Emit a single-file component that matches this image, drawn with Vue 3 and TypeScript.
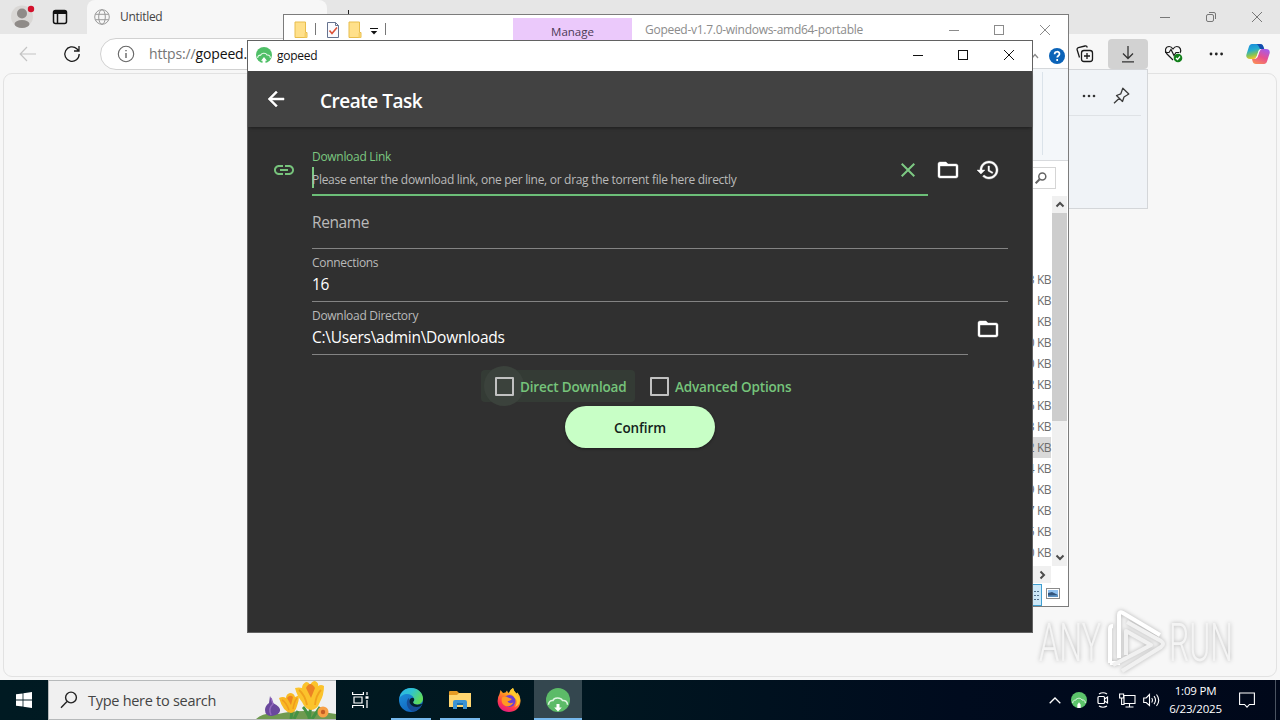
<script setup lang="ts">
interface Field {
  id: string
  label: string
  value: string
  browse: boolean
}

const fields: Field[] = [
  { id: 'rename', label: 'Rename', value: '', browse: false },
  { id: 'connections', label: 'Connections', value: '16', browse: false },
  { id: 'directory', label: 'Download Directory', value: 'C:\\Users\\admin\\Downloads', browse: true },
]

const sizes: string[] = ['3 KB', '1 KB', '1 KB', '0 KB', '0 KB', '2 KB', '6 KB', '3 KB', '2 KB', '4 KB', '9 KB', '7 KB', '5 KB', '0 KB']
const selectedRow = 8

const folderPath =
  'M20 6h-8l-2-2H4c-1.1 0-1.99.9-1.99 2L2 18c0 1.1.9 2 2 2h16c1.1 0 2-.9 2-2V8c0-1.1-.9-2-2-2zm0 12H4V8h16v10z'
</script>

<template>
  <div class="desktop">
    <!-- Browser -->
    <div class="browser">
      <div class="tabstrip">
        <div class="tabactions">
          <svg class="avatar" width="24" height="24" viewBox="0 0 24 24">
            <circle cx="11" cy="12.500" r="11" fill="#d9d7d5" />
            <circle cx="11" cy="9.500" r="5" fill="#8f8b88" />
            <ellipse cx="11" cy="20" rx="7.500" ry="4" fill="#8f8b88" />
            <circle cx="20" cy="5" r="3.200" fill="#d3112c" />
          </svg>
          <svg class="workspace" width="16" height="16" viewBox="0 0 16 16" fill="none" stroke="#111" stroke-width="1.500">
            <rect x="1.500" y="1.500" width="13" height="13" rx="2" />
            <path d="M1.500 3.500h13" stroke-width="3" />
            <path d="M5.500 4v10" />
          </svg>
        </div>
        <div class="tab">
          <svg width="16" height="16" viewBox="0 0 16 16" fill="none" stroke="#9a9a9a" stroke-width="1">
            <circle cx="8" cy="8" r="7.300" />
            <ellipse cx="8" cy="8" rx="3.300" ry="7.300" />
            <path d="M1.300 5.300h13.400M1.300 10.700h13.400" />
          </svg>
          <span class="tabtitle">Untitled</span>
          <svg class="tabclose" width="10" height="10" viewBox="0 0 10 10" stroke="#444"><path d="M1 1l8 8M9 1L1 9" /></svg>
        </div>
        <svg class="newtab" width="13" height="13" viewBox="0 0 13 13" stroke="#222"><path d="M6.500 0v13M0 6.500h13" /></svg>
        <div class="wincontrols edgecontrols">
          <svg width="12" height="12" viewBox="0 0 12 12"><path d="M1 6.500h10" /></svg>
          <svg width="12" height="12" viewBox="0 0 12 12"><rect x="1.500" y="3.500" width="7" height="7" rx="1.500" /><path d="M4 1.500h5a1.500 1.500 0 0 1 1.500 1.500v5" /></svg>
          <svg width="12" height="12" viewBox="0 0 12 12"><path d="M1 1l10 10M11 1L1 11" /></svg>
        </div>
      </div>
      <div class="toolbar">
        <svg class="back" width="18" height="16" viewBox="0 0 18 16" fill="none" stroke="#c4c4c4" stroke-width="1.200"><path d="M17 8H1.500M8 1L1.200 8 8 15" /></svg>
        <svg class="reload" width="18" height="18" viewBox="0 0 18 18" fill="none" stroke="#1b1b1b" stroke-width="1.300"><path d="M16.200 9A7.200 7.200 0 1 1 13.800 3.700L16 6M16 1v5h-5" /></svg>
        <div class="omnibox">
          <svg width="18" height="18" viewBox="0 0 18 18" fill="none" stroke="#666" stroke-width="1.100">
            <circle cx="9" cy="9" r="7.700" /><path d="M9 8v5M9 5v1.300" stroke-width="1.400" />
          </svg>
          <span class="url"><span>https://</span>gopeed.com</span>
        </div>
        <div class="edgetools">
          <svg class="collections" width="18" height="18" viewBox="0 0 18 18" fill="none" stroke="#1a1a1a" stroke-width="1.300">
            <rect x="5.500" y="5.500" width="11" height="11" rx="2.500" />
            <path d="M11 8v6M8 11h6M3.500 12.500L1.200 5C.8 3.800 1.400 3 2.400 2.700L9 1c1.200-.3 2 .3 2.300 1.500" />
          </svg>
          <div class="dlbutton">
            <svg width="14" height="18" viewBox="0 0 14 18" fill="none" stroke="#333" stroke-width="1.300"><path d="M7 1v12M2 8.500L7 13.500l5-5M1 16.800h12" /></svg>
          </div>
          <svg class="heart" width="20" height="18" viewBox="0 0 20 18" fill="none" stroke="#1b1b1b" stroke-width="1.200">
            <path d="M9 15L3 9C0 6 1.500 1.500 5.200 1.500 7 1.500 8 2.500 9 4c1-1.500 2-2.500 3.800-2.500 3.200 0 5 3.500 3.200 6.500M1 7.500h4l2-3 3 6 2-3h3" />
            <circle cx="14" cy="13" r="4.300" fill="#13801c" stroke="none" />
            <path d="M12 13l1.500 1.500 2.500-3" stroke="#fff" />
          </svg>
          <svg class="dots" width="14" height="4" viewBox="0 0 14 4" fill="#222"><circle cx="2" cy="2" r="1.400" /><circle cx="7.300" cy="2" r="1.400" /><circle cx="12.600" cy="2" r="1.400" /></svg>
          <svg class="copilot" width="24" height="22" viewBox="0 0 24 22">
            <defs>
              <linearGradient id="cpA" x1="0" y1="0" x2="0.300" y2="1"><stop offset="0" stop-color="#1687dd" /><stop offset=".45" stop-color="#26acd0" /><stop offset=".75" stop-color="#81c459" /><stop offset="1" stop-color="#f0c52b" /></linearGradient>
              <linearGradient id="cpB" x1="0.700" y1="0" x2="0.200" y2="1"><stop offset="0" stop-color="#a85be7" /><stop offset=".5" stop-color="#e8508e" /><stop offset="1" stop-color="#fa8d56" /></linearGradient>
            </defs>
            <path d="M6 1h8c2 0 3 1 3.500 3l.7 2H16c-2 0-3 .8-3.700 3l-1.500 4.600C10 15.500 9 16 7.500 16H4c-3 0-4.500-2-3.400-5L3 3.500C3.500 2 4.500 1 6 1z" fill="url(#cpA)" />
            <path d="M10.500 1H14c2 0 3 1 3.500 3l.7 2H14c-1-2-1.300-4-3.500-5z" fill="#154cae" />
            <path d="M18 21h-8c-2 0-3-1-3.500-3L6 16h2c2 0 3-.8 3.700-3l1.500-4.600C14 6.500 15 6 16.500 6H20c3 0 4.500 2 3.400 5L21 18.500c-.5 1.500-1.500 2.500-3 2.500z" fill="url(#cpB)" />
            <path d="M9 15.500q1.300-.8 2-3l1.300-4q.5-1.700 1.700-2.200h1.500q-1.500.6-2.100 2.400l-1.300 4q-.7 2.200-2.200 2.800z" fill="#f7f7f7" />
          </svg>
        </div>
      </div>
      <div class="page"></div>
    </div>

    <div class="flyout">
      <div class="flyhead">
        <svg width="14" height="4" viewBox="0 0 14 4" fill="#333"><circle cx="2" cy="2" r="1.300" /><circle cx="7" cy="2" r="1.300" /><circle cx="12" cy="2" r="1.300" /></svg>
        <svg width="17" height="17" viewBox="0 0 17 17" fill="none" stroke="#3b3b3b" stroke-width="1.300" stroke-linejoin="round"><path d="M9.800 1.200l6 5.800-2 1.300-2.800 1.700-1.500 4.500-6-6 4.300-1.700zM6.300 11.300L1 16.300" /></svg>
      </div>
    </div>

    <!-- File explorer -->
    <div class="explorer">
      <div class="extitle">
        <div class="quick">
          <svg class="fold" width="14" height="18" viewBox="0 0 14 18"><path d="M1 1h10.500v10.500H13v5H1z" fill="#ffe08a" stroke="#e8bd4c" /><path d="M10.500 12v4.500H13V12z" fill="#f5cf67" /></svg>
          <i></i>
          <svg class="check" width="12" height="16" viewBox="0 0 12 16"><path d="M.5.500h8l3 3v12H.5z" fill="#fbfbfe" stroke="#66738f" /><path d="M8.500.500v3h3" fill="none" stroke="#66738f" /><path d="M2.500 8.500l2.500 3 5-6" fill="none" stroke="#dd5238" stroke-width="1.600" /></svg>
          <svg class="fold2" width="14" height="18" viewBox="0 0 14 18"><path d="M1 1h10.500v10.500H13v5H1z" fill="#ffe08a" stroke="#e8bd4c" /><path d="M10.500 12v4.500H13V12z" fill="#f5cf67" /></svg>
          <svg class="caret" width="8" height="7" viewBox="0 0 8 7"><path d="M0 .5h8" stroke="#111" /><path d="M.8 3h6.400L4 6.500z" fill="#111" /></svg>
          <i></i>
        </div>
        <div class="manage">Manage</div>
        <div class="exname">Gopeed-v1.7.0-windows-amd64-portable</div>
        <div class="wincontrols excontrols">
          <svg width="12" height="12" viewBox="0 0 12 12"><path d="M2 6.500h10" /></svg>
          <svg width="12" height="12" viewBox="0 0 12 12"><rect x="1.500" y="1.500" width="9" height="9" /></svg>
          <svg width="12" height="12" viewBox="0 0 12 12"><path d="M1 1l10 10M11 1L1 11" /></svg>
        </div>
      </div>
      <div class="extabs">
        <svg width="8" height="6" viewBox="0 0 8 6" fill="none" stroke="#8a8a8a" stroke-width="1.300"><path d="M1 5l3-3.500L7 5" /></svg>
        <svg class="help" width="16" height="16" viewBox="0 0 16 16"><circle cx="8" cy="8" r="8" fill="#0b63b8" /><path d="M5.600 6.200c0-3.300 4.900-3.200 4.900-.3 0 1.800-2.300 1.900-2.300 3.700M8.200 11v1.900" stroke="#fff" stroke-width="1.700" fill="none" /></svg>
      </div>
      <div class="ribbon"><div class="ribbonend"></div></div>
      <div class="exaddress">
        <div class="exsearch"><svg width="12" height="12" viewBox="0 0 12 12" fill="none" stroke="#646464" stroke-width="1.500"><circle cx="7.300" cy="4.500" r="3.500" /><path d="M4.600 7.200L.7 11.300" stroke-width="2" /></svg></div>
      </div>
      <div class="exbody">
        <div class="rows">
          <div v-for="(s, i) in sizes" :key="i" class="row" :class="{ selected: i === selectedRow }">{{ s }}</div>
        </div>
        <div class="vscroll">
          <svg width="10" height="7" viewBox="0 0 10 7" fill="none" stroke="#4c4c4c" stroke-width="2"><path d="M1.500 5.500L5 2l3.500 3.500" /></svg>
          <div class="thumb"></div>
          <div class="space"></div>
          <svg width="10" height="7" viewBox="0 0 10 7" fill="none" stroke="#4c4c4c" stroke-width="2"><path d="M1.500 1.500L5 5l3.500-3.500" /></svg>
        </div>
      </div>
      <div class="hscroll"><div><svg width="7" height="10" viewBox="0 0 7 10" fill="none" stroke="#4c4c4c" stroke-width="2"><path d="M1.500 1.500L5 5 1.500 8.500" /></svg></div></div>
      <div class="exstatus">
        <div class="details"><svg width="10" height="10" viewBox="0 0 10 10" stroke="#52718c" stroke-dasharray="2 1"><path d="M0 1.500h9M0 5.500h9M0 9.500h9" /></svg></div>
        <svg width="14" height="11" viewBox="0 0 14 11"><rect x=".5" y=".5" width="13" height="10" fill="#fff" stroke="#8b8b8b" /><rect x="2" y="2" width="10" height="7" fill="#8fc0ef" /><path d="M2 5l4-1 6 3v2H2z" fill="#34557c" /><path d="M2 7.500l10-.5v2H2z" fill="#5d93c4" /></svg>
      </div>
    </div>

    <!-- Gopeed -->
    <div class="gopeed">
      <div class="gtitle">
        <svg width="16" height="16" viewBox="0 0 24 24">
          <circle cx="12" cy="12" r="12" fill="#4fbf67" />
          <path d="M2.500 16.500c0-3 2-4.500 4.500-4.300C8 9 14.500 8 16.500 12c3-.5 5 1.500 5 4.500" fill="none" stroke="#e9faec" stroke-width="1.600" />
          <path d="M9.800 24v-3.500H7.500L12 15l4.500 5.500h-2.300V24z" fill="#fff" />
        </svg>
        <span>gopeed</span>
        <div class="wincontrols gcontrols">
          <svg width="12" height="12" viewBox="0 0 12 12"><path d="M2 6.500h10" /></svg>
          <svg width="12" height="12" viewBox="0 0 12 12"><rect x="1.500" y="1.500" width="9" height="9" /></svg>
          <svg width="12" height="12" viewBox="0 0 12 12"><path d="M1 1l10 10M11 1L1 11" /></svg>
        </div>
      </div>
      <div class="appbar">
        <svg width="24" height="24" viewBox="0 0 24 24" fill="#fff" stroke="#fff" stroke-width=".5"><path d="M20 11H7.830l5.590-5.590L12 4l-8 8 8 8 1.410-1.410L7.830 13H20v-2z" /></svg>
        <h1>Create Task</h1>
      </div>
      <div class="form">
        <div class="linkrow">
          <svg class="linkicon" width="24" height="24" viewBox="0 0 24 24"><path d="M3.900 12c0-1.710 1.390-3.100 3.100-3.100h4V7H7c-2.760 0-5 2.240-5 5s2.240 5 5 5h4v-1.900H7c-1.710 0-3.100-1.390-3.100-3.100zM8 13h8v-2H8v2zm9-6h-4v1.900h4c1.710 0 3.100 1.390 3.100 3.100s-1.390 3.100-3.100 3.100h-4V17h4c2.760 0 5-2.240 5-5s-2.240-5-5-5z" /></svg>
          <div class="field active">
            <label>Download Link</label>
            <div class="hintline">
              <span class="cursor"></span>
              <span class="hint">Please enter the download link, one per line, or drag the torrent file here directly</span>
            </div>
            <svg class="clear" width="24" height="24" viewBox="0 0 24 24"><path d="M19 6.410L17.590 5 12 10.590 6.410 5 5 6.410 10.590 12 5 17.590 6.410 19 12 13.410 17.590 19 19 17.590 13.410 12z" /></svg>
          </div>
          <div class="iconbtn"><svg width="24" height="24" viewBox="0 0 24 24"><path :d="folderPath" /></svg></div>
          <div class="iconbtn"><svg width="24" height="24" viewBox="0 0 24 24"><path d="M13 3c-4.970 0-9 4.030-9 9H1l3.890 3.890.07.14L9 12H6c0-3.870 3.130-7 7-7s7 3.130 7 7-3.130 7-7 7c-1.930 0-3.680-.79-4.940-2.060l-1.420 1.420C8.270 19.990 10.510 21 13 21c4.970 0 9-4.030 9-9s-4.030-9-9-9zm-1 5v5l4.280 2.540.72-1.210-3.500-2.080V8H12z" /></svg></div>
        </div>
        <div v-for="f in fields" :key="f.id" class="fieldrow">
          <div class="field" :class="[f.id, { empty: !f.value }]">
            <label>{{ f.label }}</label>
            <div v-if="f.value" class="value">{{ f.value }}</div>
          </div>
          <div v-if="f.browse" class="iconbtn"><svg width="24" height="24" viewBox="0 0 24 24"><path :d="folderPath" /></svg></div>
        </div>
        <div class="checks">
          <div class="check hovered"><b><i></i></b><span>Direct Download</span></div>
          <div class="check"><b><i></i></b><span>Advanced Options</span></div>
        </div>
        <button class="confirm">Confirm</button>
      </div>
    </div>

    <!-- Watermark -->
    <svg class="watermark" width="210" height="70" viewBox="0 0 210 70">
      <g class="wmtext">
        <text x="4" y="54" textLength="62" lengthAdjust="spacingAndGlyphs">ANY</text>
        <text x="134" y="54" textLength="64" lengthAdjust="spacingAndGlyphs">RUN</text>
      </g>
      <g class="wmlogo" fill="none" stroke-width="4" stroke-linejoin="round">
        <path d="M75 56V22q0-3 3-3M84 51V8q0-4 4-2l37 22M75 56l10 0" stroke="#fff" />
        <path d="M91 48V24l25 14-38 20M87 64l39-24q4-3 0-6L92 15" stroke="#f1f1f1" />
      </g>
    </svg>

    <!-- Taskbar -->
    <div class="taskbar">
      <div class="start"><svg width="16" height="16" viewBox="0 0 16 16" fill="#fff"><path d="M0 2.300L6.600 1.400V7.600H0zM7.400 1.300L16 0v7.600H7.400zM0 8.400h6.600v6.200L0 13.700zM7.400 8.400H16V16l-8.600-1.200z" /></svg></div>
      <div class="search">
        <svg class="mag" width="18" height="18" viewBox="0 0 18 18" fill="none" stroke="#222" stroke-width="1.400"><circle cx="11" cy="6.500" r="5.400" /><path d="M7 10.500L1 16.800" /></svg>
        <span>Type here to search</span>
        <svg class="flowers" width="80" height="38" viewBox="0 0 80 38">
          <path d="M0 38q8-7 22-5 24-6 58 0v5z" fill="#6f9a50" />
          <path d="M35 38l1-8M54 38q-4-9-7-12M53 38l2-14M38 38l4-8M56 38l8-12" stroke="#459243" stroke-width="3" fill="none" />
          <path d="M14 15l3 7q8 4 7 8t-8 5q-7 0-7-6 0-4 4-7z" fill="#6a489d" /><path d="M15 17l2 6q-5 4-2 11" stroke="#9269bd" stroke-width="1.500" fill="none" />
          <path d="M23 17q4-2 7 0 0-4 4-5 4 0 5 4 3-1 4-2 0 6-2 11-2 7-6 7-8-1-12-15z" fill="#f9b924" /><path d="M31 17q3-4 6-1l-2 8z" fill="#ee8422" /><path d="M26 19q4 2 7 10M41 17q-3 4-4 11" stroke="#f09c1d" stroke-width="1.500" fill="none" />
          <path d="M39 7q4-1 7 0 0-4 4-6 3 0 4 3 2-4 5-4 4 2 3 5 3-2 6 0 0 9-4 16-3 8-9 8-6-1-9-8-5-6-7-14z" fill="#fbc32c" /><path d="M50 7q4-8 9 0l-4 10z" fill="#ec8224" /><path d="M43 9q6 5 8 15M65 9q-5 5-6 15" stroke="#f0a11c" stroke-width="1.800" fill="none" />
          <circle cx="67" cy="31" r="5.500" fill="#f7a046" /><circle cx="67" cy="31" r="2.200" fill="#c45d25" />
        </svg>
      </div>
      <div class="task plain">
        <svg width="17" height="16" viewBox="0 0 17 16" fill="none" stroke="#fff" stroke-width="1.200"><path d="M.6 0v2.500h10.800V0M.6 16v-2.500h10.800V16M2 5h8v6H2zM15 0v3M15 8v8" /><path d="M13.500 5.500h3" stroke-width="2.500" /></svg>
      </div>
      <div class="task running">
        <svg width="24" height="24" viewBox="0 0 24 24">
          <defs>
            <linearGradient id="edA" x1="0" y1="0" x2="1" y2=".5"><stop offset="0" stop-color="#2bb4ea" /><stop offset=".5" stop-color="#2fc3d0" /><stop offset="1" stop-color="#5fdc5a" /></linearGradient>
            <linearGradient id="edB" x1="0" y1="0" x2=".6" y2="1"><stop offset="0" stop-color="#2098df" /><stop offset="1" stop-color="#1062bc" /></linearGradient>
          </defs>
          <circle cx="12" cy="12" r="12" fill="url(#edB)" />
          <path d="M.5 10C1.500 4 6 0 12 0c7 0 12 5 12 10.500 0 4-3 6-6.500 6-3 0-4-1.500-3.500-2.500 1-1 1.500-2 1-3.500C14 7 10 5.500 7 6 4 6.500 1.500 8 .5 10z" fill="url(#edA)" />
          <path d="M9.500 10c-4 5-.5 12 4.500 13.500 4-.7 7-3 8.500-6C18 20 11.500 18 10.700 14c-.3-1.700 0-3-1.200-4z" fill="#174d96" />
          <path d="M14 14c1-1 1.500-2 1-3.500-1-1.500-4-1-4.500 2-.5 3.500 3 6.500 7 6.500 2.500 0 5-1 6-3.500-2.500 1.500-9 2-9.500-1.500z" fill="#05202b" />
        </svg>
      </div>
      <div class="task running">
        <svg width="22" height="20" viewBox="0 0 22 20"><path d="M0 2q0-1 1-1h7l2 2h12v14H0z" fill="#e59b25" /><path d="M0 5h8l2-2h12v14H0z" fill="#ffd670" /><path d="M4 19v-7q0-2 2-2h10q2 0 2 2v7h-4v-4H8v4z" fill="#3c93d2" /><path d="M8 13h6v2H8z" fill="#1a6fb1" /></svg>
      </div>
      <div class="task">
        <svg width="24" height="24" viewBox="0 0 24 24">
          <defs><linearGradient id="ffA" x1=".8" y1="0" x2=".3" y2="1"><stop offset="0" stop-color="#ffe348" /><stop offset=".4" stop-color="#ff9520" /><stop offset=".75" stop-color="#ff3750" /><stop offset="1" stop-color="#e21a82" /></linearGradient></defs>
          <path d="M2.500 6L3.500 2l2.500 3q1-.5 2.500-.5L10 2.500q.5 2 2 2.500 1-3.500 4-5 .5 3 3.500 5.500l1-1q3.500 4 3 9C23 20 18 24 12 24S1 20 .6 13.500Q.500 9 2.500 6z" fill="url(#ffA)" />
          <circle cx="12.500" cy="13" r="6" fill="#6b3fd2" />
          <path d="M5 9.500q4-2 6 0l4 1.500q-2 2-4.500 2 1 3.500 6 1.500-3 5-8 3.500Q3.500 16 5 9.500z" fill="#ff9a23" />
          <path d="M12 5q4 1 5 4l2.500 3q1 4-2 7 6-2 5.500-8.500Q20 8 19 5.500 17 3 16 0q-3 2-4 5z" fill="#ffc92e" />
        </svg>
      </div>
      <div class="task running current">
        <svg width="24" height="24" viewBox="0 0 24 24">
          <circle cx="12" cy="12" r="12" fill="#5cbb68" />
          <path d="M2.500 16.800c0-3 2-4.500 4.500-4.300C8 9.500 14.500 9 16.500 12.500c3-.5 5 1.500 5 4.300" fill="none" stroke="#dff5e2" stroke-width="1.500" />
          <path d="M10.500 16h3v3.500h2.300L12 23.500l-3.800-4h2.300z" fill="#fff" />
        </svg>
      </div>
      <div class="tray">
        <svg class="up" width="12" height="7" viewBox="0 0 12 7" fill="none" stroke="#fff" stroke-width="1.300"><path d="M.7 6.300L6 1l5.300 5.300" /></svg>
        <svg class="tgo" width="16" height="16" viewBox="0 0 24 24">
          <circle cx="12" cy="12" r="12" fill="#5cc46b" />
          <path d="M2.500 16.500c0-3 2-4.500 4.500-4.300C8 9 14.500 8 16.500 12c3-.5 5 1.500 5 4.500" fill="none" stroke="#e9faec" stroke-width="1.500" />
          <path d="M9.500 24v-5L12 15.500l2.500 3.500v5z" fill="#fff" />
        </svg>
        <svg class="cam" width="12" height="16" viewBox="0 0 12 16" fill="none" stroke="#fff" stroke-width="1.200"><rect x="1" y="4.500" width="6.500" height="7" rx="1" /><path d="M7.500 7L10.500 5v6l-3-2M2 2q4-2.500 8 0M2 14q4 2.500 8 0" /></svg>
        <svg class="net" width="17" height="15" viewBox="0 0 17 15" fill="none" stroke="#fff" stroke-width="1.100"><path d="M5 2.500h11v8H5zM10.500 10.500v3.500M6.500 14h8M.6 1h4v4h-4zM2.600 5v6.500h3" /></svg>
        <svg class="vol" width="18" height="14" viewBox="0 0 18 14" fill="none" stroke="#fff" stroke-width="1.100"><path d="M.7 5v4.500h2.500L6.500 12.500v-11L3.200 5zM8.700 5q1.500 2 0 4.500M11 3.200q3 4 0 8M13.500 1.500q4.500 5.700 0 11.500" /></svg>
        <div class="clock"><span class="time">1:09 PM</span><span class="date">6/23/2025</span></div>
        <svg class="notice" width="16" height="17" viewBox="0 0 16 17" fill="none" stroke="#fff" stroke-width="1.100"><path d="M.6 1h14.800v11.500H10.500L8 15.200l-2.500-2.700H.6z" /></svg>
        <div class="peek"></div>
      </div>
    </div>
  </div>
</template>

<style>
html,
body {
  margin: 0;
  overflow: hidden;
}
</style>

<style scoped>
* {
  box-sizing: border-box;
}
svg {
  display: block;
  flex: none;
}
.desktop {
  position: relative;
  width: 1280px;
  height: 720px;
  overflow: hidden;
  background: #f7f7f7;
  font-family: "Open Sans", "Noto Sans", sans-serif;
  font-size: 12px;
  color: #222;
  white-space: nowrap;
}
.browser {
  display: flex;
  flex-direction: column;
  height: 680px;
  background: #f7f7f7;
}
.tabstrip {
  display: flex;
  height: 34px;
  background: #e6e6e6;
}
.tabactions {
  display: flex;
  width: 87px;
  padding: 4px 0 0 11px;
}
.workspace {
  margin: 5px 0 0 17px;
}
.tab {
  display: flex;
  align-items: center;
  width: 240px;
  padding: 0 5px 0 7px;
  background: #f7f7f7;
  border-radius: 8px 8px 0 0;
}
.tabtitle {
  margin-left: 10px;
  margin-top: -1px;
  font-size: 12px;
  letter-spacing: -0.3px;
  color: #444;
}
.tabclose {
  margin-left: auto;
  margin-top: 4px;
}
.newtab {
  margin: 10px 0 0 15px;
}
.wincontrols {
  display: flex;
  gap: 34px;
  fill: none;
  stroke: currentColor;
}
.edgecontrols {
  margin: 11px 17px 0 auto;
  color: #777;
}
.toolbar {
  display: flex;
  align-items: center;
  height: 39px;
  padding: 0 10px 0 19px;
}
.back {
  width: 18px;
}
.reload {
  margin-left: 26px;
}
.omnibox {
  display: flex;
  align-items: center;
  flex: 1;
  height: 32px;
  margin-left: 19px;
  padding-left: 16px;
  border: 1px solid #d1d1d1;
  border-radius: 16px;
  background: #fff;
}
.url {
  margin-left: 14px;
  font-size: 14px;
  letter-spacing: -0.15px;
  color: #111;
}
.url span {
  color: #767676;
}
.edgetools {
  display: flex;
  align-items: center;
  width: 194px;
  margin-left: 20px;
}
.dlbutton {
  display: grid;
  place-items: center;
  width: 40px;
  height: 30px;
  margin-left: 14px;
  border-radius: 4px;
  background: #d2d2d2;
}
.heart {
  margin-left: 16px;
}
.dots {
  margin-left: 25px;
}
.copilot {
  margin-left: auto;
}
.page {
  flex: 1;
  margin: 0 3px 3px;
  border: 1px solid #e2e2e2;
  border-radius: 9px;
  background: #f7f7f7;
}
.flyout {
  position: absolute;
  left: 1000px;
  top: 69px;
  width: 148px;
  height: 140px;
  background: #f0f3f7;
  border: 1px solid #d4d6d9;
}
.flyhead {
  display: flex;
  align-items: center;
  justify-content: flex-end;
  gap: 17px;
  height: 46px;
  margin-right: 6px;
  padding: 6px 11px 0 0;
  border-bottom: 1px solid #dfe2e6;
}
.explorer {
  position: absolute;
  left: 283px;
  top: 14px;
  width: 786px;
  height: 593px;
  display: flex;
  flex-direction: column;
  background: #fff;
  border: 1px solid #7c7c7c;
}
.extitle {
  display: flex;
  height: 29px;
}
.quick {
  display: flex;
  width: 229px;
  padding: 6px 0 0 10px;
}
.quick i {
  width: 1px;
  height: 12px;
  margin: 2px 0 0 7px;
  background: #777;
}
.quick .check {
  margin: 1px 0 0 11px;
}
.fold2 {
  margin-left: 9px;
}
.caret {
  margin: 7px 0 0 8px;
}
.manage {
  width: 119px;
  height: 29px;
  margin-top: 3px;
  background: #ebc9fb;
  font-size: 11.500px;
  line-height: 28px;
  text-align: center;
  color: #4c3a55;
}
.exname {
  margin: 6px 0 0 13px;
  font-size: 12px;
  line-height: 17px;
  letter-spacing: -0.28px;
  color: #8c8c8c;
}
.excontrols {
  margin: 9px 17px 0 auto;
  color: #8b8b8b;
}
.extabs {
  display: flex;
  align-items: center;
  justify-content: flex-end;
  gap: 10px;
  height: 25px;
  padding-right: 3px;
  border-bottom: 1px solid #d5d8db;
}
.ribbon {
  height: 92px;
  padding: 3px 0 5px;
  background: #f4f7fa;
  border-bottom: 1px solid #d8dadd;
}
.ribbonend {
  width: 759px;
  height: 83px;
  border-right: 1px solid #dbe3ea;
}
.exaddress {
  display: flex;
  justify-content: flex-end;
  height: 35px;
  padding: 6px 12px 0 0;
}
.exsearch {
  display: grid;
  place-items: center end;
  width: 200px;
  height: 22px;
  padding-right: 8px;
  border: 1px solid #d5d5d5;
}
.exbody {
  display: flex;
  height: 370px;
}
.rows {
  width: 768px;
  padding-top: 73px;
}
.row {
  width: 767px;
  height: 21px;
  text-align: right;
  font-size: 12px;
  line-height: 21px;
  letter-spacing: -0.5px;
  word-spacing: 0.2px;
  color: #6d6d6d;
}
.row.selected {
  background: #d9d9d9;
}
.vscroll {
  display: flex;
  flex-direction: column;
  align-items: center;
  width: 15px;
  padding: 5px 0;
  background: #f0f0f0;
}
.thumb {
  width: 15px;
  height: 208px;
  margin-top: 5px;
  background: #cdcdcd;
}
.space {
  flex: 1;
}
.hscroll {
  height: 17px;
}
.hscroll div {
  display: grid;
  place-items: center end;
  width: 767px;
  height: 17px;
  padding-right: 5px;
  background: #f0f0f0;
}
.exstatus {
  display: flex;
  align-items: center;
  justify-content: flex-end;
  flex: 1;
  gap: 4px;
  padding-right: 8px;
}
.exstatus > svg {
  margin-top: -2px;
}
.details {
  display: grid;
  place-items: center end;
  width: 22px;
  height: 22px;
  border: 1px solid #3e9fd1;
  background: #cde8f8;
}
.gopeed {
  position: absolute;
  left: 247px;
  top: 40px;
  width: 786px;
  height: 593px;
  display: flex;
  flex-direction: column;
  border: 1px solid #626262;
  background: #303030;
  color: #fff;
}
.gtitle {
  display: flex;
  align-items: center;
  height: 30px;
  padding: 0 17px 2px 8px;
  background: #fff;
  color: #111;
}
.gtitle span {
  margin-left: 5px;
  letter-spacing: -0.25px;
}
.gcontrols {
  margin-left: auto;
  color: #111;
}
.appbar {
  position: relative;
  display: flex;
  align-items: center;
  height: 56px;
  padding-left: 16px;
  background: #424242;
  box-shadow: 0 2px 3px -1px rgba(0, 0, 0, 0.4);
}
.appbar h1 {
  margin: 4px 0 0 32px;
  font-size: 19px;
  line-height: 28px;
  font-weight: 600;
  letter-spacing: -0.48px;
}
.form {
  display: flex;
  flex-direction: column;
  padding: 16px 24px 0;
}
.linkrow,
.fieldrow {
  display: flex;
  height: 53px;
}
.fieldrow {
  padding-left: 40px;
}
.linkicon {
  margin: 15px 16px 0 0;
  fill: #77c47c;
}
.field {
  position: relative;
  flex: 1;
  border-bottom: 1px solid #838383;
}
.field label {
  display: block;
  padding-top: 6px;
  font-size: 12px;
  line-height: 16px;
  letter-spacing: -0.3px;
  color: #bababa;
}
.field.empty label {
  padding-top: 13px;
  font-size: 15.500px;
  line-height: 26px;
  letter-spacing: -0.4px;
}
.field.active {
  border-bottom: 2px solid #6cbf78;
}
.field.active label {
  color: #7cc980;
}
.value {
  font-size: 15.500px;
  line-height: 26px;
  letter-spacing: -0.25px;
}
.hintline {
  display: flex;
}
.cursor {
  width: 2px;
  height: 21px;
  margin-top: 2px;
  background: #7dc983;
}
.hint {
  margin-left: -2px;
  font-size: 12px;
  line-height: 30px;
  letter-spacing: -0.295px;
  color: #bababa;
}
.clear {
  position: absolute;
  right: 8px;
  top: 15px;
  fill: #7dc983;
}
.iconbtn {
  width: 40px;
  padding: 15px 8px 0;
  fill: #fff;
  stroke: #fff;
  stroke-width: 0.4;
}
.checks {
  display: flex;
  margin: 15px 0 0 209px;
}
.checks .check {
  display: flex;
  align-items: center;
  width: 154px;
  height: 32px;
  border-radius: 4px;
  color: #76c47b;
  font-size: 13.500px;
  font-weight: 600;
  letter-spacing: -0.15px;
}
.checks .hovered {
  background: #343b35;
}
.check b {
  flex: none;
  display: grid;
  place-items: center;
  width: 40px;
  height: 40px;
  margin-left: 3px;
  margin-right: -4px;
  border-radius: 50%;
}
.check span {
  padding-top: 2px;
}
.hovered b {
  background: #3b423c;
}
.check i {
  width: 19px;
  height: 19px;
  border: 2px solid #c1c1c1;
  border-radius: 1px;
}
.check + .check b {
  margin-left: 4px;
}
.confirm {
  align-self: center;
  width: 150px;
  height: 42px;
  margin-top: 4px;
  padding: 2px 0 0;
  border: 0;
  border-radius: 21px;
  background: #c8ffc6;
  box-shadow: 0 1px 3px rgba(0, 0, 0, 0.4);
  color: #14221a;
  font: 600 13.500px "Open Sans", sans-serif;
  letter-spacing: -0.1px;
}
.watermark {
  position: absolute;
  left: 1035px;
  top: 607px;
  overflow: visible;
}
.wmtext {
  fill: #f4f4f4;
  font: 300 54px Roboto, sans-serif;
  filter: drop-shadow(0 0 2px rgba(0, 0, 0, 0.27));
}
.wmlogo {
  filter: drop-shadow(0 0 2px rgba(0, 0, 0, 0.27));
}
.taskbar {
  display: flex;
  height: 40px;
  background: linear-gradient(90deg, #001a22, #001720 45%, #000b1e 75%, #00081a);
}
.start {
  display: grid;
  place-items: center;
  width: 48px;
}
.search {
  display: flex;
  align-items: center;
  width: 288px;
  padding-left: 11px;
  border: 1px solid #b6b9ba;
  border-right: 0;
  background: #f0f0f0;
  font-size: 14.500px;
  color: #444;
}
.search span {
  margin-left: 10px;
  letter-spacing: -0.28px;
}
.flowers {
  margin-left: auto;
}
.task {
  display: grid;
  place-items: center;
  width: 48px;
  height: 40px;
  margin-right: 1px;
}
.task.plain {
  width: 50px;
  padding-right: 2px;
}
.task.running {
  background: linear-gradient(#76b9ed, #76b9ed) center bottom / 40px 2px no-repeat;
}
.task.current {
  background: linear-gradient(#76b9ed, #76b9ed) center bottom / 48px 2px no-repeat #34474f;
}
.tray {
  display: flex;
  align-items: center;
  margin-left: auto;
  color: #fff;
}
.tgo {
  margin-left: 10px;
}
.cam {
  margin-left: 10px;
}
.net {
  margin-left: 10px;
}
.vol {
  margin-left: 7px;
}
.clock {
  display: flex;
  flex-direction: column;
  align-items: center;
  width: 69px;
  line-height: 18px;
  font-size: 11.500px;
  letter-spacing: -0.2px;
}
.notice {
  margin-left: 9px;
}
.peek {
  width: 5px;
  height: 40px;
  margin-left: 20px;
  border-left: 1px solid #4a5361;
}
</style>
